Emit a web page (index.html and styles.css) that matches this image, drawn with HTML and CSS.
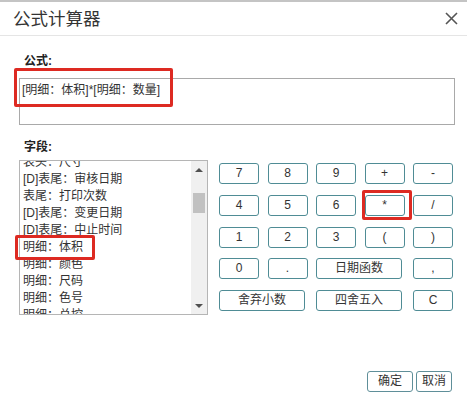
FILE: index.html
```html
<!DOCTYPE html>
<html lang="zh">
<head>
<meta charset="utf-8">
<title>公式计算器</title>
<link rel="stylesheet" href="styles.css">
</head>
<body>
<div class="dialog">
  <div class="topstrip"></div>
  <div class="header">
    <div class="title">公式计算器</div>
    <svg class="close" width="13" height="13" viewBox="0 0 13 13"><path d="M1 1L12 12M12 1L1 12" stroke="#555" stroke-width="1.6" fill="none"/></svg>
  </div>
  <div class="content">
    <div class="label">公式:</div>
    <div class="formula">[明细：体积]*[明细：数量]</div>
    <div class="label label-fields">字段:</div>
    <div class="main">
      <div class="listbox">
        <div class="items">
          <div class="item">表头：尺寸</div>
          <div class="item">[D]表尾：审核日期</div>
          <div class="item">表尾：打印次数</div>
          <div class="item">[D]表尾：变更日期</div>
          <div class="item">[D]表尾：中止时间</div>
          <div class="item">明细：体积</div>
          <div class="item">明细：颜色</div>
          <div class="item">明细：尺码</div>
          <div class="item">明细：色号</div>
          <div class="item">明细：总控</div>
        </div>
        <div class="scrollbar">
          <div class="arrow arrow-up"></div>
          <div class="track"><div class="thumb"></div></div>
          <div class="arrow arrow-down"></div>
        </div>
      </div>
      <div class="keys">
        <button class="key">7</button>
        <button class="key">8</button>
        <button class="key">9</button>
        <button class="key">+</button>
        <button class="key">-</button>
        <button class="key">4</button>
        <button class="key">5</button>
        <button class="key">6</button>
        <button class="key">*</button>
        <button class="key">/</button>
        <button class="key">1</button>
        <button class="key">2</button>
        <button class="key">3</button>
        <button class="key">(</button>
        <button class="key">)</button>
        <button class="key">0</button>
        <button class="key">.</button>
        <button class="key span2">日期函数</button>
        <button class="key">,</button>
        <button class="key span2">舍弃小数</button>
        <button class="key span2">四舍五入</button>
        <button class="key">C</button>
      </div>
    </div>
  </div>
  <div class="footer">
    <button class="btn btn-ok">确定</button>
    <button class="btn">取消</button>
  </div>
  <div class="mark mark-formula"></div>
  <div class="mark mark-field"></div>
  <div class="mark mark-key"></div>
</div>
</body>
</html>
```

FILE: styles.css
```css
html, body {
  margin: 0;
  padding: 0;
  background: #fff;
}
body {
  font-family: "Liberation Sans", "Noto Sans CJK SC", sans-serif;
  color: #333;
  font-size: 12px;
}
.dialog {
  position: relative;
  width: 467px;
  height: 414px;
  overflow: hidden;
}
.topstrip {
  height: 2px;
  background: #c4c4c4;
}
.header {
  height: 33px;
  display: flex;
  align-items: center;
  justify-content: space-between;
  padding: 0 9px 0 13px;
  border-bottom: 1px solid #e5e5e5;
}
.title {
  font-size: 17.5px;
  line-height: 20px;
  color: #333;
  letter-spacing: 0;
}
.close {
  display: block;
}
.content {
  padding: 17px 12px 0 19px;
}
.label {
  font-weight: bold;
  font-size: 12px;
  line-height: 16px;
  padding-left: 5px;
  color: #222;
  margin-bottom: 9px;
}
.label-fields {
  margin-bottom: 5px;
}
.formula {
  box-sizing: border-box;
  width: 436px;
  height: 47px;
  border: 1px solid #a9a9a9;
  padding: 3px 2px;
  line-height: 17px;
  font-size: 12px;
  color: #333;
  margin-bottom: 14px;
}
.main {
  display: flex;
  align-items: flex-start;
}
.listbox {
  box-sizing: border-box;
  width: 189px;
  height: 155px;
  border: 1px solid #b5b5b5;
  display: flex;
  overflow: hidden;
}
.items {
  flex: 1;
  margin-top: -7px;
  padding-left: 3px;
  overflow: hidden;
}
.item {
  height: 17px;
  line-height: 17px;
  white-space: nowrap;
  font-size: 12px;
  color: #333;
}
.scrollbar {
  width: 16px;
  background: #f0f0f0;
  display: flex;
  flex-direction: column;
}
.arrow {
  height: 17px;
  display: flex;
  align-items: center;
  justify-content: center;
}
.arrow::before {
  content: "";
  width: 0;
  height: 0;
  border-left: 4px solid transparent;
  border-right: 4px solid transparent;
}
.arrow-up::before {
  border-bottom: 4px solid #505050;
}
.arrow-down::before {
  border-top: 4px solid #505050;
}
.track {
  flex: 1;
  padding: 15px 2px 0 2px;
}
.thumb {
  height: 20px;
  background: #c1c1c1;
}
.keys {
  display: grid;
  grid-template-columns: repeat(5, 40px);
  grid-auto-rows: 21px;
  column-gap: 8.5px;
  row-gap: 10.75px;
  margin: 3px 0 0 11px;
}
.key, .btn {
  box-sizing: border-box;
  background: #fff;
  border: 1px solid #4f8c95;
  border-radius: 3px;
  font-family: "Liberation Sans", "Noto Sans CJK SC", sans-serif;
  font-size: 12px;
  color: #333;
  padding: 0;
  line-height: 19px;
  text-align: center;
}
.span2 {
  grid-column: span 2;
  width: 86px;
}
.footer {
  display: flex;
  justify-content: flex-end;
  gap: 3px;
  padding-right: 15px;
  margin-top: 56px;
}
.btn {
  height: 21px;
  width: 36px;
  border-color: #5f8f99;
}
.btn-ok {
  width: 46px;
}
.mark {
  position: absolute;
  box-sizing: border-box;
  border: 3px solid #dd2a22;
  border-radius: 2px;
}
.mark-formula {
  left: 14px;
  top: 68px;
  width: 159px;
  height: 39px;
}
.mark-field {
  left: 15px;
  top: 235px;
  width: 80px;
  height: 25px;
}
.mark-key {
  left: 362px;
  top: 190px;
  width: 50px;
  height: 30px;
}
```
